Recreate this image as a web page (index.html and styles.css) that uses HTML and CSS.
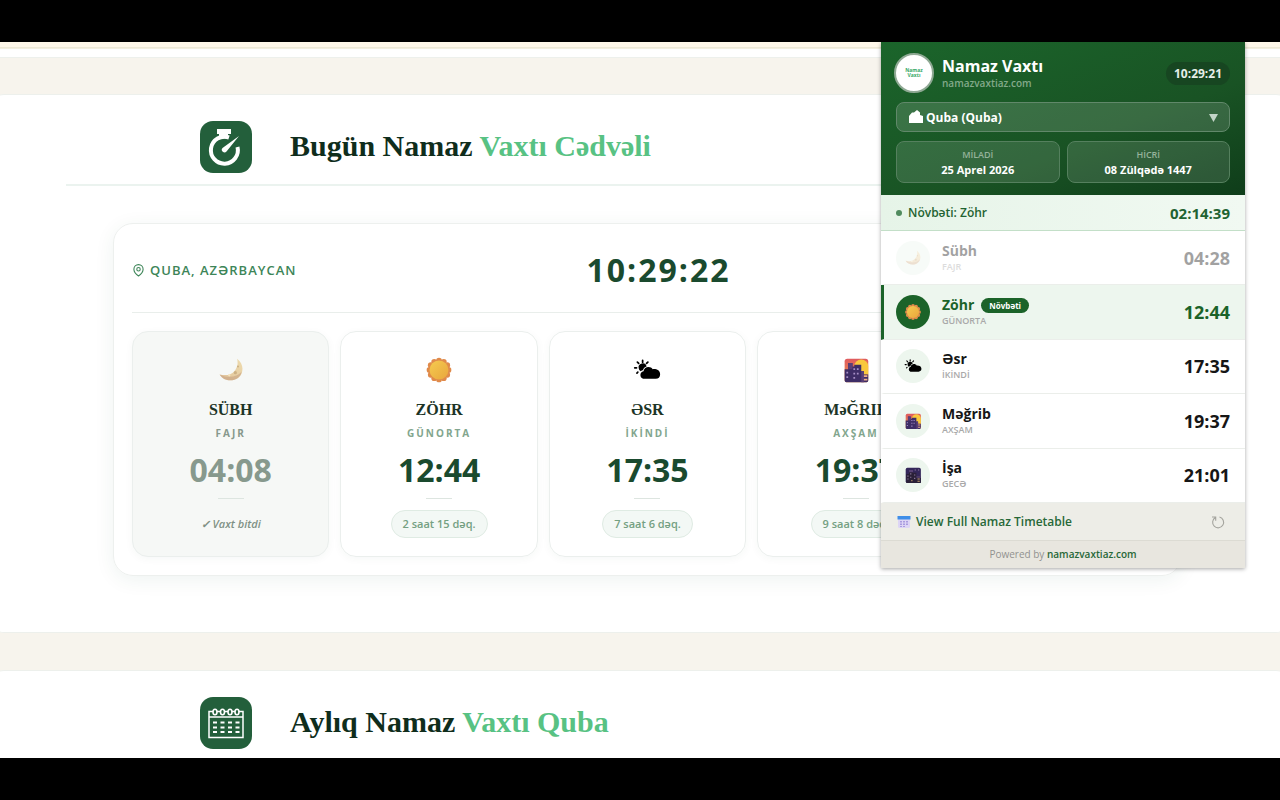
FILE: index.html
```html
<!DOCTYPE html>
<html lang="az">
  <head>
    <meta charset="UTF-8" />
    <meta name="viewport" content="width=device-width, initial-scale=1.0" />
    <title>Namaz Vaxtı</title>
    <link rel="stylesheet" href="styles.css">
  </head>
  <body>
    <!-- shared drawings -->
    <svg class="sprite" aria-hidden="true">
      <linearGradient id="sunFill" x1="0" y1="0" x2="1" y2="1">
        <stop offset="0" stop-color="#f5cb50" />
        <stop offset="1" stop-color="#e9a63c" />
      </linearGradient>
      <linearGradient id="moonFill" x1="0" y1="1" x2="1" y2="0">
        <stop offset="0" stop-color="#e0c29a" />
        <stop offset="1" stop-color="#eedcae" />
      </linearGradient>
      <linearGradient id="duskFill" x1="0" y1="0" x2="0" y2="1">
        <stop offset="0" stop-color="#df5a5f" />
        <stop offset="1" stop-color="#f09a48" />
      </linearGradient>
      <symbol id="moon" viewBox="0 0 32 32">
        <path d="M23 3c8 6 8 17 1 22-7 5-17 3-21-4 8 2 14 0 17-4 4-5 4-9 3-14z" fill="url(#moonFill)" />
        <path d="M3 21c4 7 14 9 21 4 2-2 4-4 4-7-5 6-15 8-25 3z" fill="#c7a182" opacity=".6" />
        <circle cx="24" cy="12" r="1.2" fill="#cdb184" />
        <circle cx="21" cy="19" r="1.8" fill="#cdb184" />
        <circle cx="14" cy="22" r="1.3" fill="#f4e4c0" />
      </symbol>
      <symbol id="sun" viewBox="-1 -1 34 34">
        <g fill="#e08a4a">
          <circle cx="16" cy="4.500" r="3.500" /><circle cx="21.800" cy="6" r="3.500" />
          <circle cx="26" cy="10.200" r="3.500" /><circle cx="27.500" cy="16" r="3.500" />
          <circle cx="26" cy="21.800" r="3.500" /><circle cx="21.800" cy="26" r="3.500" />
          <circle cx="16" cy="27.500" r="3.500" /><circle cx="10.200" cy="26" r="3.500" />
          <circle cx="6" cy="21.800" r="3.500" /><circle cx="4.500" cy="16" r="3.500" />
          <circle cx="6" cy="10.200" r="3.500" /><circle cx="10.200" cy="6" r="3.500" />
        </g>
        <circle cx="16" cy="16" r="11.500" fill="url(#sunFill)" />
      </symbol>
      <symbol id="cloud" viewBox="0 0 32 32">
        <g stroke="#000" stroke-width="2" stroke-linecap="round">
          <path d="M11 5v2M5 7l1.500 1.500M17 7l-1.500 1.500M2 13.500h2M4.500 19.500l1-1" />
        </g>
        <path d="M6.500 14a4.500 4.500 0 0 1 9-2c-2 .5-3.500 2-4 4-1 .2-2 .7-2.700 1.500A4.500 4.500 0 0 1 6.500 14z" />
        <path d="M11.500 26a4.400 4.400 0 0 1 .5-8.500c.5-3.500 3-5 5.500-5s4 1 5 2.500c4.500-.5 8.500 1.500 8.500 6 0 3-2 5-5 5z" />
      </symbol>
      <symbol id="dusk" viewBox="0 0 32 32">
        <rect x="3" y="3" width="27" height="27" rx="3" fill="url(#duskFill)" />
        <path d="M14 12a8 8 0 0 1 16 0v9H14z" fill="#f9c83d" />
        <path d="M3 15h4V8h5v4h2v-2h8v7h3v4h5v7a2 2 0 0 1-2 2H5a2 2 0 0 1-2-2z" fill="#3e2d66" />
        <path d="M7 8h5v7H7zM22 17h3v13h-3z" fill="#5a3f78" />
        <path d="M5 18h2v2H5zM5 23h2v2H5zM13 14h2v2h-2zM17 14h2v2h-2zM13 19h2v2h-2zM17 19h2v2h-2zM13 24h2v2h-2z" fill="#a68fc5" />
        <path d="M25 22h4v2h-4zM25 26h4v2h-4z" fill="#f0b08a" />
      </symbol>
      <symbol id="night" viewBox="0 0 32 32">
        <rect x="3" y="3" width="27" height="27" rx="3" fill="#34275a" />
        <path d="M4 14h5V7h7v5h6v6h8v12H4z" fill="#2a2038" />
        <path d="M9 7h7v4H9zM22 18h8v3h-8z" fill="#584275" />
        <path d="M6 17h2v2H6zM6 22h2v2H6zM11 13h2v2h-2zM11 19h2v2h-2zM18 15h2v2h-2zM18 21h2v2h-2zM25 6h2v2h-2zM19 6h2v2h-2z" fill="#9580a4" />
        <path d="M24 22h4v2h-4zM24 26h4v2h-4zM13 25h2v2h-2z" fill="#c4a070" />
      </symbol>
    </svg>

    <div class="page">
      <div class="notice"></div>

      <section class="panel">
        <div class="panel-head">
          <svg class="panel-icon" viewBox="0 0 52 52">
            <rect width="52" height="52" rx="13" fill="#235f3b" />
            <path d="M17 8h14v5h-3v4l-9 1v-5h-2z" fill="#fff" />
            <path d="M29 16.500a13.500 13.500 0 1 0 8.500 9.500" fill="none" stroke="#fff" stroke-width="4" />
            <path d="M39 15 26.500 30.500a2.600 2.600 0 0 1-4-3.500z" fill="#fff" />
          </svg>
          <h2>Bugün Namaz <span>Vaxtı Cədvəli</span></h2>
        </div>

        <div class="today">
          <div class="today-head">
            <span class="place">
              <svg viewBox="0 0 24 24" fill="none" stroke="currentColor" stroke-width="2">
                <path d="M20.500 10.500C20.500 17 12 23 12 23s-8.500-6-8.500-12.500a8.500 8.500 0 0 1 17 0z" />
                <circle cx="12" cy="10.500" r="3.200" />
              </svg>
              QUBA, AZƏRBAYCAN
            </span>
            <span class="clock">10:29:22</span>
          </div>

          <div class="cards">
            <div class="card passed">
              <svg class="card-icon"><use href="#moon" /></svg>
              <h3>SÜBH</h3>
              <p class="sub">FAJR</p>
              <p class="time">04:08</p>
              <hr />
              <p class="left">✓ Vaxt bitdi</p>
            </div>
            <div class="card">
              <svg class="card-icon"><use href="#sun" /></svg>
              <h3>ZÖHR</h3>
              <p class="sub">GÜNORTA</p>
              <p class="time">12:44</p>
              <hr />
              <p class="left">2 saat 15 dəq.</p>
            </div>
            <div class="card">
              <svg class="card-icon"><use href="#cloud" /></svg>
              <h3>ƏSR</h3>
              <p class="sub">İKİNDİ</p>
              <p class="time">17:35</p>
              <hr />
              <p class="left">7 saat 6 dəq.</p>
            </div>
            <div class="card">
              <svg class="card-icon"><use href="#dusk" /></svg>
              <h3>MəĞRIB</h3>
              <p class="sub">AXŞAM</p>
              <p class="time">19:37</p>
              <hr />
              <p class="left">9 saat 8 dəq.</p>
            </div>
          </div>
        </div>
      </section>

      <section class="panel">
        <div class="panel-head">
          <svg class="panel-icon" viewBox="0 0 52 52" fill="none" stroke="#fff">
            <rect width="52" height="52" rx="13" fill="#235f3b" stroke="none" />
            <path d="M9 14.500h34v26H9zM9 20h34" stroke-width="1.500" />
            <g fill="#235f3b" stroke-width="1.600">
              <ellipse cx="15" cy="15" rx="2" ry="2.800" /><ellipse cx="22.500" cy="15" rx="2" ry="2.800" />
              <ellipse cx="30" cy="15" rx="2" ry="2.800" /><ellipse cx="37" cy="15" rx="2" ry="2.800" />
            </g>
            <path d="M13 25.500h27M13 30.500h27M13 35h27" stroke-width="2" stroke-dasharray="4 3.500" />
          </svg>
          <h2>Aylıq Namaz <span>Vaxtı Quba</span></h2>
        </div>
      </section>

      <aside class="popup">
        <header class="top">
          <div class="brand">
            <span class="logo">Namaz<br />Vaxtı</span>
            <div class="brand-text">
              <h1>Namaz Vaxtı</h1>
              <p>namazvaxtiaz.com</p>
            </div>
            <span class="now">10:29:21</span>
          </div>
          <div class="city">
            <svg class="city-icon" viewBox="0 0 16 16">
              <path d="M1 7l3-3.500h2L9 1l3 2.500V6l3 1v7H1z" fill="#fff" />
            </svg>
            <select aria-label="Quba (Quba)">
              <option>Quba (Quba)</option>
            </select>
            <svg class="city-arrow" viewBox="0 0 10 10"><path d="M0 1h10L5 10z" fill="#c3d5c8" /></svg>
          </div>
          <div class="dates">
            <div class="date"><span>MİLADİ</span><b>25 Aprel 2026</b></div>
            <div class="date"><span>HİCRİ</span><b>08 Zülqədə 1447</b></div>
          </div>
        </header>

        <div class="next">
          <i class="dot"></i>
          <span>Növbəti: Zöhr</span>
          <b>02:14:39</b>
        </div>

        <ul class="list">
          <li class="done">
            <span class="round"><svg><use href="#moon" /></svg></span>
            <div class="name"><h4>Sübh</h4><p>FAJR</p></div>
            <b>04:28</b>
          </li>
          <li class="active">
            <span class="round"><svg><use href="#sun" /></svg></span>
            <div class="name"><h4>Zöhr <em>Növbəti</em></h4><p>GÜNORTA</p></div>
            <b>12:44</b>
          </li>
          <li>
            <span class="round"><svg><use href="#cloud" /></svg></span>
            <div class="name"><h4>Əsr</h4><p>İKİNDİ</p></div>
            <b>17:35</b>
          </li>
          <li>
            <span class="round"><svg><use href="#dusk" /></svg></span>
            <div class="name"><h4>Məğrib</h4><p>AXŞAM</p></div>
            <b>19:37</b>
          </li>
          <li>
            <span class="round"><svg><use href="#night" /></svg></span>
            <div class="name"><h4>İşa</h4><p>GECƏ</p></div>
            <b>21:01</b>
          </li>
        </ul>

        <div class="full">
          <a href="#">
            <svg viewBox="0 0 14 14">
              <rect x="1" y="1" width="12" height="12" rx="1.500" fill="#ddd5f5" />
              <path d="M0.500 1h13v3.500H.5z" fill="#3f8ee8" />
              <path d="M3 6h2v1.500H3zM6 6h2v1.500H6zM9 6h2v1.500H9zM3 8.500h2V10H3zM6 8.500h2V10H6zM9 8.500h2V10H9zM3 11h2v1H3zM6 11h2v1H6z" fill="#a99be0" />
            </svg>
            View Full Namaz Timetable
          </a>
          <button type="button" aria-label="↻">
            <svg viewBox="0 0 14 14" fill="none" stroke="#a3a39d" stroke-width="1.100">
              <path d="M4.500 2.500A5.500 5.500 0 1 0 8.500 2M1 2h3.700v3.700" />
            </svg>
          </button>
        </div>
        <p class="powered">Powered by <a href="#">namazvaxtiaz.com</a></p>
      </aside>
    </div>
  </body>
</html>
```

FILE: styles.css
```css
* {
  box-sizing: border-box;
  margin: 0;
  padding: 0;
}

body {
  display: flex;
  flex-direction: column;
  height: 100vh;
  padding: 42px 0;
  background-color: black;
  font-family: "Open Sans", "Noto Sans", sans-serif;
}

.sprite {
  position: absolute;
  width: 0;
  height: 0;
}

.page {
  position: relative;
  flex: 1;
  min-height: 0;
  overflow: hidden;
  background: #f7f4ed;
}

.notice {
  height: 16px;
  margin-bottom: 36px;
  background: linear-gradient(#fff8ea 5px, #ebe6d2 5px, #f6f2e4 7px, white 7px);
  border-bottom: 1px solid #edf0ec;
}

.panel {
  margin: 0 -8px 37px;
  padding: 26px 58px 56px 74px;
  background: white;
  border: 1px solid #edf0ec;
  border-width: 1px 0;
  border-radius: 12px;
}

.panel-head {
  display: flex;
  align-items: center;
  gap: 38px;
  padding: 0 134px 11px;
  border-bottom: 2px solid #ebf3ef;
}

.panel-icon {
  width: 52px;
  height: 52px;
}

h2 {
  padding-bottom: 3px;
  font-family: "Liberation Serif", serif;
  font-size: 30px;
  line-height: 36px;
  color: #0f2d1c;
}

h2 span {
  color: #58c283;
}

.today {
  margin: 37px 48px 0 47px;
  padding: 18px;
  border: 1px solid #edf0ee;
  border-radius: 20px;
  box-shadow: 0 4px 20px rgba(20, 80, 50, 0.07);
}

.today-head {
  display: grid;
  grid-template-columns: 170px 1fr 148px;
  align-items: center;
  padding-bottom: 14px;
  border-bottom: 1px solid #e9eeeb;
}

.place {
  display: flex;
  align-items: center;
  gap: 5px;
  font-size: 13px;
  font-weight: 600;
  letter-spacing: 1px;
  white-space: nowrap;
  color: #3d8558;
}

.place svg {
  width: 13px;
  height: 14px;
}

.clock {
  font-size: 32px;
  font-weight: bold;
  line-height: 56px;
  letter-spacing: 2px;
  text-align: center;
  color: #1a4a2e;
}

.cards {
  display: grid;
  grid-template-columns: repeat(5, 1fr);
  gap: 11px;
  margin-top: 18px;
}

.card {
  display: flex;
  flex-direction: column;
  align-items: center;
  padding: 24px 8px 18px;
  border: 1px solid #ebefed;
  border-radius: 16px;
  box-shadow: 0 2px 8px rgba(20, 80, 50, 0.04);
}

.card-icon {
  width: 28px;
  height: 28px;
}

.card h3 {
  margin-top: 15px;
  font-family: "Liberation Serif", serif;
  font-size: 16px;
  line-height: 22px;
  color: #1c3426;
}

.sub {
  margin-top: 5px;
  font-size: 10px;
  font-weight: bold;
  line-height: 14px;
  letter-spacing: 2px;
  color: #82a68e;
}

.time {
  margin-top: 10px;
  font-size: 32px;
  font-weight: bold;
  line-height: 40px;
  color: #1a4a2e;
}

.card hr {
  width: 26px;
  height: 1px;
  margin: 8px 0 11px;
  border: 0;
  background: #dde5e0;
}

.left {
  padding: 0 11px;
  border: 1px solid #dfebe3;
  border-radius: 14px;
  background: #f3f8f5;
  font-size: 11px;
  font-weight: 600;
  line-height: 26px;
  white-space: nowrap;
  color: #74a082;
}

.passed {
  background: #f6f8f6;
}

.passed .sub,
.passed .time {
  color: #87998d;
}

.passed .left {
  border-color: transparent;
  background: none;
  font-style: italic;
  color: #7f9185;
}

/* widget over the page */
.popup {
  position: absolute;
  top: 0;
  right: 35px;
  width: 364px;
  background: white;
  box-shadow: 0 1px 4px rgba(0, 0, 0, 0.35);
}

.top {
  padding: 11px 15px 12px;
  background: linear-gradient(160deg, #1b652b, #195324 60%, #0f3d1a);
  color: white;
}

.brand {
  display: flex;
  align-items: center;
  gap: 8px;
  margin-left: -2px;
}

.logo {
  display: flex;
  align-items: center;
  justify-content: center;
  width: 40px;
  height: 40px;
  border: 2px solid #8fa994;
  border-radius: 50%;
  background: white;
  font-size: 5px;
  font-weight: bold;
  line-height: 5px;
  text-align: center;
  color: #35a866;
}

.brand-text {
  flex: 1;
}

h1 {
  font-size: 16px;
  line-height: 19px;
}

.brand p {
  font-size: 10px;
  font-weight: 600;
  line-height: 14px;
  color: #83a98a;
}

.now {
  padding: 0 8px;
  border-radius: 12px;
  background: #174621;
  font-size: 12px;
  font-weight: bold;
  line-height: 23px;
  color: #e6efe8;
}

.city {
  position: relative;
  margin-top: 9px;
}

.city select {
  display: block;
  width: 100%;
  height: 30px;
  padding: 0 29px;
  appearance: none;
  border: 1px solid #61886a;
  border-radius: 8px;
  background: rgba(255, 255, 255, 0.14);
  font: bold 12px "Open Sans", sans-serif;
  color: white;
}

.city-icon {
  position: absolute;
  top: 7px;
  left: 12px;
  width: 16px;
  height: 16px;
}

.city-arrow {
  position: absolute;
  top: 11px;
  right: 12px;
  width: 9px;
  height: 9px;
}

.dates {
  display: flex;
  gap: 7px;
  margin-top: 9px;
}

.date {
  flex: 1;
  padding: 5px 0;
  border: 1px solid #55805e;
  border-radius: 8px;
  background: rgba(255, 255, 255, 0.12);
  text-align: center;
}

.date span,
.date b {
  display: block;
  line-height: 15px;
}

.date span {
  font-size: 9px;
  font-weight: 600;
  color: #96b39b;
}

.date b {
  font-size: 11px;
}

.next {
  display: flex;
  align-items: center;
  gap: 6px;
  height: 36px;
  padding: 0 15px;
  border-bottom: 1px solid #c3dfc8;
  background: linear-gradient(90deg, #e6f4e8, #f1f9f2);
  font-size: 12px;
  font-weight: 600;
  color: #1f6332;
}

.next b {
  margin-left: auto;
  font-size: 15px;
  font-weight: bold;
}

.dot {
  width: 6px;
  height: 6px;
  border-radius: 50%;
  background: #508b5e;
}

.list {
  display: grid;
  grid-auto-rows: 1fr;
  min-height: 272px;
  list-style: none;
}

.list li {
  display: flex;
  align-items: center;
  gap: 12px;
  padding: 0 15px 0 12px;
  border-bottom: 1px solid #ebeeea;
  border-left: 3px solid transparent;
  color: #161616;
}

.round {
  display: flex;
  align-items: center;
  justify-content: center;
  width: 34px;
  height: 34px;
  border-radius: 50%;
  background: #edf6ee;
}

.round svg {
  width: 18px;
  height: 18px;
}

.name {
  flex: 1;
}

h4 {
  display: flex;
  align-items: center;
  gap: 7px;
  font-size: 14px;
  line-height: 18px;
}

.name p {
  font-size: 9px;
  font-weight: 600;
  line-height: 14px;
  color: #a9a9a9;
}

.list b {
  font-size: 18px;
}

.list .done > * {
  opacity: 0.4;
}

.list .active {
  border-left-color: #1b6329;
  background: #edf6ee;
  color: #1b6329;
}

.active .round {
  background: #1b6329;
}

em {
  padding: 0 8px;
  border-radius: 8px;
  background: #1b6329;
  font-size: 8px;
  font-style: normal;
  line-height: 15px;
  color: white;
}

.full {
  display: flex;
  align-items: center;
  justify-content: space-between;
  height: 38px;
  padding: 0 20px 0 16px;
  border-bottom: 1px solid #dcdbd3;
  background: #edede7;
}

.full a {
  display: flex;
  align-items: center;
  gap: 5px;
  font-size: 12px;
  font-weight: 600;
  text-decoration: none;
  color: #276838;
}

.full svg {
  display: block;
  width: 14px;
  height: 14px;
}

.full button {
  border: 0;
  background: none;
}

.powered {
  background: #e8e6df;
  font-size: 10px;
  line-height: 27px;
  text-align: center;
  color: #929290;
}

.powered a {
  font-weight: 600;
  text-decoration: none;
  color: #276838;
}
```
